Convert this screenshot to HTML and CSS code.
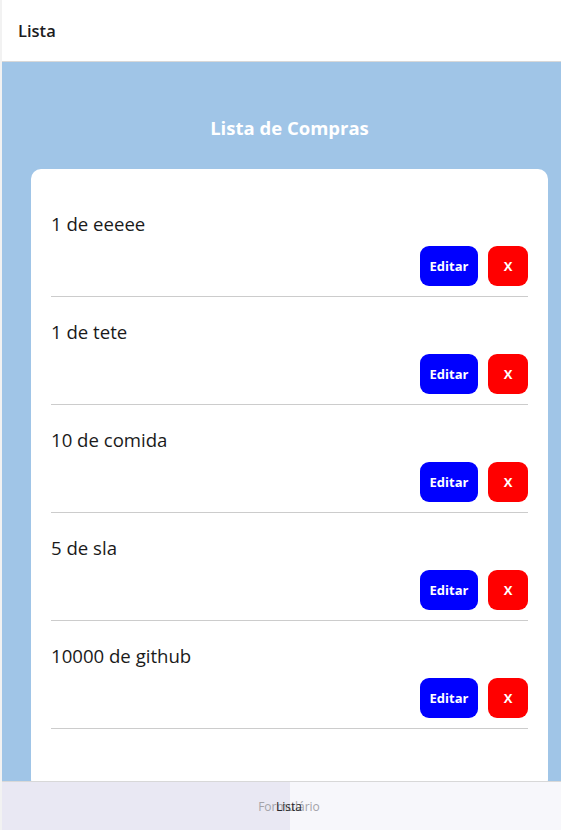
FILE: index.html
```html
<!DOCTYPE html>
<html>
<head>
<meta charset="utf-8">
<link rel="stylesheet" href="styles.css">
</head>
<body>
<div class="app">
  <header class="header"><span class="header-title">Lista</span></header>
  <main class="screen">
    <h1 class="title">Lista de Compras</h1>
    <div class="card">
      <div class="item">
        <div class="item-text">1 de eeeee</div>
        <div class="actions"><button class="btn edit">Editar</button><button class="btn del">X</button></div>
      </div>
      <div class="item">
        <div class="item-text">1 de tete</div>
        <div class="actions"><button class="btn edit">Editar</button><button class="btn del">X</button></div>
      </div>
      <div class="item">
        <div class="item-text">10 de comida</div>
        <div class="actions"><button class="btn edit">Editar</button><button class="btn del">X</button></div>
      </div>
      <div class="item">
        <div class="item-text">5 de sla</div>
        <div class="actions"><button class="btn edit">Editar</button><button class="btn del">X</button></div>
      </div>
      <div class="item">
        <div class="item-text">10000 de github</div>
        <div class="actions"><button class="btn edit">Editar</button><button class="btn del">X</button></div>
      </div>
    </div>
  </main>
  <nav class="tabbar">
    <div class="tab tab-active"></div>
    <div class="tab"></div>
    <span class="tab-label label-form">Formulário</span>
    <span class="tab-label label-list">Lista</span>
  </nav>
</div>
</body>
</html>
```
FILE: styles.css
```css
* { box-sizing: border-box; }
html, body { margin: 0; padding: 0; height: 100%; overflow: hidden; }
body {
  font-family: "Open Sans", "Noto Sans", sans-serif;
  background: #f2f2f2;
}
.app {
  margin-left: 2px;
  height: 830px;
  display: flex;
  flex-direction: column;
  position: relative;
  overflow: hidden;
}
.header {
  height: 62px;
  flex: none;
  background: #ffffff;
  border-bottom: 1px solid #d8d8d8;
  display: flex;
  align-items: center;
  padding-left: 16px;
}
.header-title {
  font-size: 16.5px;
  font-weight: 600;
  color: #1c1c1e;
}
.screen {
  flex: 1;
  background: #a0c5e7;
  padding: 0 13px 0 29px;
  overflow: hidden;
}
.title {
  margin: 53px 0 28px;
  text-align: center;
  color: #ffffff;
  font-size: 18.5px;
  font-weight: 700;
  line-height: 26px;
}
.card {
  background: #ffffff;
  border-radius: 10px;
  padding: 20px 20px 60px;
}
.item {
  padding: 23px 0 10px;
  border-bottom: 1px solid #cccccc;
}
.item-text {
  font-size: 18.6px;
  line-height: 24px;
  color: #1a1a1a;
  margin-bottom: 10px;
}
.actions {
  display: flex;
  justify-content: flex-end;
  gap: 10px;
}
.btn {
  height: 40px;
  border: none;
  border-radius: 9px;
  color: #ffffff;
  font-family: "Open Sans", "Noto Sans", sans-serif;
  font-weight: 700;
  font-size: 13px;
  padding: 0;
}
.edit { background: #0000ff; width: 58px; }
.del { background: #ff0000; width: 40px; }
.tabbar {
  position: relative;
  height: 49px;
  flex: none;
  display: flex;
  border-top: 1px solid #d8d8d8;
}
.tab { flex: none; width: 288px; background: #f7f7fb; }
.tab + .tab { flex: 1; }
.tab-active { background: #e9e8f3; }
.tab-label {
  position: absolute;
  top: 16px;
  left: 287px;
  transform: translateX(-50%);
  font-size: 12px;
  line-height: 18px;
}
.label-form { color: #a3a3a8; }
.label-list { color: #28282b; }
```
